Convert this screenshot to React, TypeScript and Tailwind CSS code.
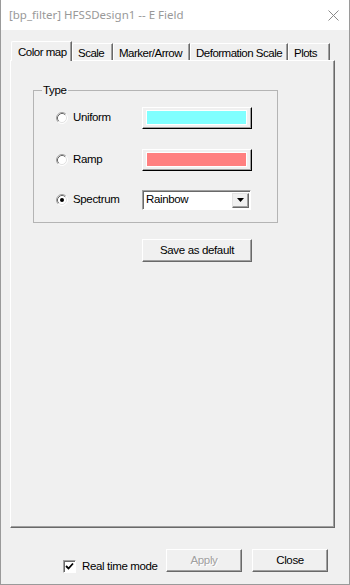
import React from "react";

const F = { fontFamily: '"Liberation Sans", Arial, sans-serif' };
const T = "text-[11.5px] tracking-[-0.35px]";
const TT = "text-[11.5px] tracking-[-0.5px]";

function Radio({ checked }: { checked?: boolean }) {
  return (
    <svg width="12" height="12" viewBox="0 0 12 12" className="shrink-0">
      <circle cx="6" cy="6" r="5" fill="#fff" />
      <path d="M2.11 9.89 A5.5 5.5 0 0 1 9.89 2.11" fill="none" stroke="#a0a0a0" strokeWidth="1" />
      <path d="M9.89 2.11 A5.5 5.5 0 0 1 2.11 9.89" fill="none" stroke="#ffffff" strokeWidth="1" />
      <path d="M2.82 9.18 A4.5 4.5 0 0 1 9.18 2.82" fill="none" stroke="#696969" strokeWidth="1" />
      <path d="M9.18 2.82 A4.5 4.5 0 0 1 2.82 9.18" fill="none" stroke="#e3e3e3" strokeWidth="1" />
      {checked && <circle cx="6" cy="6" r="2" fill="#000" />}
    </svg>
  );
}

function ColorButton({ color }: { color: string }) {
  return (
    <div className="flex h-[22px] w-[110px] border-t border-l border-white border-b border-r border-b-black border-r-black bg-[#f0f0f0] pt-[2px] pl-[3px] pr-[4px] pb-[3px] shadow-[inset_-1px_-1px_0_#a0a0a0]">
      <div className="flex flex-1 border border-white">
        <div className="flex-1" style={{ background: color }} />
      </div>
    </div>
  );
}

function WinButton({ children, w, disabled }: { children: React.ReactNode; w: string; disabled?: boolean }) {
  return (
    <div
      className={`${w} flex h-[23px] items-center justify-center border-t border-l border-white border-b border-r border-b-[#696969] border-r-[#696969] bg-[#f0f0f0] shadow-[inset_-1px_-1px_0_#a0a0a0] ${T} ${
        disabled ? "text-[#a0a0a0] [text-shadow:1px_1px_0_#ffffff]" : "text-black"
      }`}
      style={F}
    >
      {children}
    </div>
  );
}

function Tab({ label, w, selected }: { label: string; w: string; selected?: boolean }) {
  if (selected) {
    return (
      <div className={`${w} relative z-10 -mb-px flex h-[20px] items-start pl-[6px] pt-[2px] bg-[#f0f0f0] border-t border-l border-white border-r border-r-[#696969] shadow-[inset_-1px_0_0_#a0a0a0] rounded-tl-[2px] ${TT} text-black`} style={F}>
        {label}
      </div>
    );
  }
  return (
    <div className={`${w} flex h-[17px] items-start pl-[5px] pt-[1px] bg-[#f0f0f0] border-t border-l border-white border-r border-r-[#696969] shadow-[inset_-1px_0_0_#a0a0a0] rounded-tl-[2px] ${TT} text-black`} style={F}>
      {label}
    </div>
  );
}

export default function App() {
  return (
    <div className="flex h-[585px] w-[350px] flex-col overflow-hidden border-l border-b border-r border-[#9a9a9a] bg-[#f0f0f0]">
      {/* Title bar */}
      <div className="flex h-[30px] shrink-0 items-center justify-between bg-white pl-[8px] pr-[10px]">
        <span className="text-[11.5px] text-[#999999]" style={{ fontFamily: '"Noto Sans", "Open Sans", sans-serif' }}>
          [bp_filter] HFSSDesign1 -- E Field
        </span>
        <svg width="11" height="11" viewBox="0 0 11 11">
          <path d="M0.5 0.5 L10.5 10.5 M10.5 0.5 L0.5 10.5" stroke="#8a8a8a" strokeWidth="1" fill="none" />
        </svg>
      </div>

      {/* Body */}
      <div className="flex flex-col pl-[9px]">
        {/* Tabs */}
        <div className="mt-[11px] flex h-[19px] items-end pl-[1px]">
          <Tab label="Color map" w="w-[61px]" selected />
          <Tab label="Scale" w="w-[41px]" />
          <Tab label="Marker/Arrow" w="w-[77px]" />
          <Tab label="Deformation Scale" w="w-[98px]" />
          <Tab label="Plots" w="w-[42px]" />
        </div>

        {/* Panel */}
        <div className="flex h-[468px] w-[325px] flex-col border-t border-l border-white border-r border-b border-r-[#696969] border-b-[#696969] shadow-[inset_-1px_-1px_0_#a0a0a0]">
          {/* Group box */}
          <div className="relative ml-[22px] mt-[29px] flex w-[245px] flex-col border border-[#b4b4b4] pt-[16px] pb-[12px] pl-[22px]">
            <span className={`absolute left-[8px] top-[-8px] bg-[#f0f0f0] px-[1px] leading-[14px] ${T} text-black`} style={F}>
              Type
            </span>
            <div className="flex h-[22px] items-center">
              <div className={`flex w-[86px] items-center gap-[5px] ${T} text-black`} style={F}>
                <Radio />
                <span>Uniform</span>
              </div>
              <ColorButton color="#80ffff" />
            </div>
            <div className="mt-[20px] flex h-[22px] items-center">
              <div className={`flex w-[86px] items-center gap-[5px] ${T} text-black`} style={F}>
                <Radio />
                <span>Ramp</span>
              </div>
              <ColorButton color="#ff8080" />
            </div>
            <div className="mt-[19px] flex h-[20px] items-center">
              <div className={`flex w-[86px] items-center gap-[5px] ${T} text-black`} style={F}>
                <Radio checked />
                <span>Spectrum</span>
              </div>
              <div className="flex h-[20px] w-[109px] items-center border-t border-l border-[#a0a0a0] border-b border-r border-b-white border-r-white bg-white shadow-[inset_1px_1px_0_#696969]">
                <span className={`flex-1 pl-[3px] ${T} text-black`} style={F}>
                  Rainbow
                </span>
                <div className="mr-[1px] flex h-[15px] w-[17px] items-center justify-center border-t border-l border-[#e3e3e3] border-b border-r border-b-[#696969] border-r-[#696969] bg-[#f0f0f0] shadow-[inset_-1px_-1px_0_#a0a0a0]">
                  <svg width="7" height="4" viewBox="0 0 7 4">
                    <path d="M0 0 H7 L3.5 4 Z" fill="#000" />
                  </svg>
                </div>
              </div>
            </div>
          </div>

          <div className="ml-[131px] mt-[16px]">
            <WinButton w="w-[110px]">Save as default</WinButton>
          </div>
        </div>
      </div>

      {/* Bottom row */}
      <div className="mt-[21px] flex items-start pl-[62px]">
        <div className="mt-[9px] flex w-[103px] items-center gap-[6px]">
          <div className="flex h-[13px] w-[13px] items-center justify-center border-t border-l border-[#a0a0a0] border-b border-r border-b-white border-r-white bg-white shadow-[inset_1px_1px_0_#696969]">
            <svg width="9" height="9" viewBox="0 0 9 9">
              <path d="M1 4 L3.5 6.5 L8 1.5" fill="none" stroke="#000" strokeWidth="1.8" />
            </svg>
          </div>
          <span className={`${T} text-black`} style={F}>
            Real time mode
          </span>
        </div>
        <WinButton w="w-[76px]" disabled>
          Apply
        </WinButton>
        <div className="ml-[10px]">
          <WinButton w="w-[76px]">Close</WinButton>
        </div>
      </div>
    </div>
  );
}
